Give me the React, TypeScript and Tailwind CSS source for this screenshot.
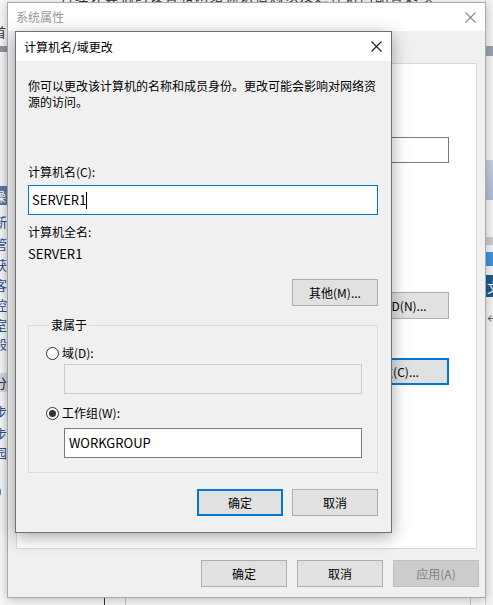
import type { ReactNode } from "react";

const font = "font-['Noto_Sans_CJK_SC','Microsoft_YaHei',sans-serif]";

function CloseIcon({ className }: { className?: string }) {
  return (
    <svg width="11" height="11" viewBox="0 0 11 11" className={className}>
      <path d="M0.5 0.5 L10.5 10.5 M10.5 0.5 L0.5 10.5" stroke="currentColor" strokeWidth="1.1" />
    </svg>
  );
}

function WinButton({
  children,
  focused,
  disabled,
  className = "w-[86px]",
}: {
  children: ReactNode;
  focused?: boolean;
  disabled?: boolean;
  className?: string;
}) {
  let look = "bg-[#e1e1e1] border border-[#adadad] text-black";
  if (focused) look = "bg-[#e1e1e1] border-2 border-[#0078d7] text-black";
  if (disabled) look = "bg-[#cccccc] border border-[#bfbfbf] text-[#838383]";
  return (
    <div className={`h-[27px] flex items-center justify-center text-xs shrink-0 ${look} ${className}`}>
      {children}
    </div>
  );
}

function Radio({ checked, label }: { checked?: boolean; label: string }) {
  return (
    <div className="flex items-center h-4 text-xs">
      <span className="w-[13px] h-[13px] rounded-full border border-[#333] bg-white flex items-center justify-center">
        {checked && <span className="w-[7px] h-[7px] rounded-full bg-[#333]" />}
      </span>
      <span className="ml-[3px]">{label}</span>
    </div>
  );
}

// narrow slice of the navigation window on the far left
const leftChars: { top: number; ch: string; tone: string }[] = [
  { top: 222, ch: "新", tone: "text-[#2b4d8f]" },
  { top: 244, ch: "管", tone: "text-[#2b4d8f]" },
  { top: 265, ch: "获", tone: "text-[#2b4d8f]" },
  { top: 285, ch: "客", tone: "text-[#2b4d8f]" },
  { top: 305, ch: "控", tone: "text-[#2b4d8f]" },
  { top: 325, ch: "室", tone: "text-[#2b4d8f]" },
  { top: 344, ch: "般", tone: "text-[#2b4d8f]" },
  { top: 412, ch: "步", tone: "text-[#2b4d8f]" },
  { top: 434, ch: "步", tone: "text-[#2b4d8f]" },
  { top: 453, ch: "园", tone: "text-[#2b4d8f]" },
  { top: 492, ch: "0", tone: "text-[#333]" },
];

function LeftWindow() {
  return (
    <div className="absolute left-0 top-0 w-[8px] h-full bg-[#f7f8fa] overflow-hidden">
      <div className="absolute left-[-7px] top-[22px] text-[13px] text-[#333]">首</div>
      <div className="absolute left-0 top-[46px] w-full h-[6px] bg-[#8e98a6]" />
      <div className="absolute left-0 top-[186px] w-full h-[19px] bg-[#5c7ca6]">
        <span className="absolute left-[-7px] top-0 text-[13px] text-white">操</span>
      </div>
      {leftChars.map((c, i) => (
        <span
          key={i}
          className={`absolute left-[-6px] text-[13px] leading-4 ${c.tone}`}
          style={{ top: c.top - 8 }}
        >
          {c.ch}
        </span>
      ))}
      <div className="absolute left-0 top-[373px] w-full h-[19px] bg-[#d5d9df]">
        <span className="absolute left-[-6px] top-0 text-[13px] text-[#2b3a5a]">分</span>
      </div>
    </div>
  );
}

function RightWindow() {
  return (
    <div className="absolute left-[485px] top-0 w-[8px] h-full bg-[#f4f4f4] border-l border-[#cfcfcf] overflow-hidden">
      <div className="absolute left-0 top-[46px] w-full h-[10px] bg-[#9aa3ae]" />
      <div className="absolute left-0 top-[160px] w-full h-[40px] bg-gradient-to-b from-[#c6d0e2] to-[#aebcd8]" />
      <div className="absolute left-0 top-[237px] w-full h-[8px] bg-[#c9cdd3]" />
      <div className="absolute left-0 top-[252px] w-full h-[14px] bg-[#3d92df]" />
      <div className="absolute left-0 top-[275px] w-full h-[22px] bg-[#1d5c8c]">
        <span className="absolute left-[1px] top-[2px] text-[13px] text-white">文</span>
      </div>
      <span className="absolute left-[1px] top-[308px] text-[13px] text-[#666]">←</span>
    </div>
  );
}

function SystemProperties() {
  return (
    <div className="absolute left-[7px] top-[2px] w-[479px] h-[596px] flex flex-col bg-[#f0f0f0] border border-[#aaaaaa] shadow-[0_2px_10px_rgba(0,0,0,0.25)]">
      <div className="h-[28px] bg-white flex items-center justify-between pl-[8px] pr-[9px] shrink-0">
        <span className="text-xs text-[#999]">系统属性</span>
        <CloseIcon className="text-[#8a8a8a]" />
      </div>
      <div className="h-[32px] shrink-0" />
      <div className="mx-[8px] h-[486px] bg-white border border-[#d9d9d9] flex flex-col items-end pr-[27px] shrink-0">
        <div className="mt-[73px] w-[260px] h-[26px] border border-[#7a7a7a] bg-white" />
        <div className="mt-[129px]">
          <WinButton className="w-[110px]">网络 ID(N)...</WinButton>
        </div>
        <div className="mt-[39px]">
          <WinButton focused className="w-[110px]">更改(C)...</WinButton>
        </div>
      </div>
      <div className="flex justify-end gap-[10px] pr-[6px] mt-[11px]">
        <WinButton>确定</WinButton>
        <WinButton>取消</WinButton>
        <WinButton disabled>应用(A)</WinButton>
      </div>
    </div>
  );
}

function RenameDialog() {
  return (
    <div className="absolute left-[15px] top-[31px] w-[377px] h-[502px] flex flex-col bg-[#f0f0f0] border border-[#707070] shadow-[0_4px_16px_rgba(0,0,0,0.35)] text-black">
      <div className="h-[29px] bg-white flex items-center justify-between pl-[8px] pr-[9px] shrink-0">
        <span className="text-xs">计算机名/域更改</span>
        <CloseIcon className="text-[#222]" />
      </div>
      <div className="flex flex-col pl-[12px] pr-[13px] pt-[17px] text-xs">
        <p className="leading-4">
          你可以更改该计算机的名称和成员身份。更改可能会影响对网络资源的访问。
        </p>
        <div className="mt-[54px] leading-4">计算机名(C):</div>
        <div className="mt-[5px] h-[30px] border border-[#0078d7] bg-white flex items-center pl-[3px]">
          <span className="text-[13px]">SERVER1</span>
          <span className="w-px h-[17px] bg-black" />
        </div>
        <div className="mt-[9px] leading-4">计算机全名:</div>
        <div className="mt-[6px] leading-4 text-[13px]">SERVER1</div>
        <div className="mt-[17px] flex justify-end">
          <WinButton>其他(M)...</WinButton>
        </div>
        <fieldset className="mt-[11px] border border-[#dcdcdc] pl-[17px] pr-[15px] pt-[12px] pb-[14px]">
          <legend className="ml-[3px] px-[2px] leading-4">隶属于</legend>
          <Radio label="域(D):" />
          <div className="mt-[3px] ml-[18px] h-[30px] border border-[#cccccc] bg-[#f0f0f0]" />
          <div className="mt-[11px]">
            <Radio checked label="工作组(W):" />
          </div>
          <div className="mt-[7px] ml-[18px] h-[30px] border border-[#7a7a7a] bg-white flex items-center pl-[4px] text-[13px]">
            WORKGROUP
          </div>
        </fieldset>
        <div className="mt-[16px] flex justify-end gap-[9px]">
          <WinButton focused>确定</WinButton>
          <WinButton>取消</WinButton>
        </div>
      </div>
    </div>
  );
}

export default function App() {
  return (
    <div className={`relative w-[493px] h-[605px] overflow-hidden bg-[#fafafa] ${font}`}>
      {/* window peeking out above the system properties frame */}
      <div className="absolute left-[60px] top-[-14px] text-[13px] text-[#333] tracking-[2px]">
        管理计算机的设置和网络标识信息以及远程访问配置选项
      </div>
      <div className="absolute left-[104px] top-[596px] w-px h-[12px] bg-[#333]" />
      <div className="absolute left-[125px] top-[596px] w-px h-[12px] bg-[#c8c8c8]" />
      <div className="absolute left-[470px] top-[596px] w-px h-[12px] bg-[#c8c8c8]" />
      <LeftWindow />
      <RightWindow />
      <SystemProperties />
      <RenameDialog />
    </div>
  );
}
